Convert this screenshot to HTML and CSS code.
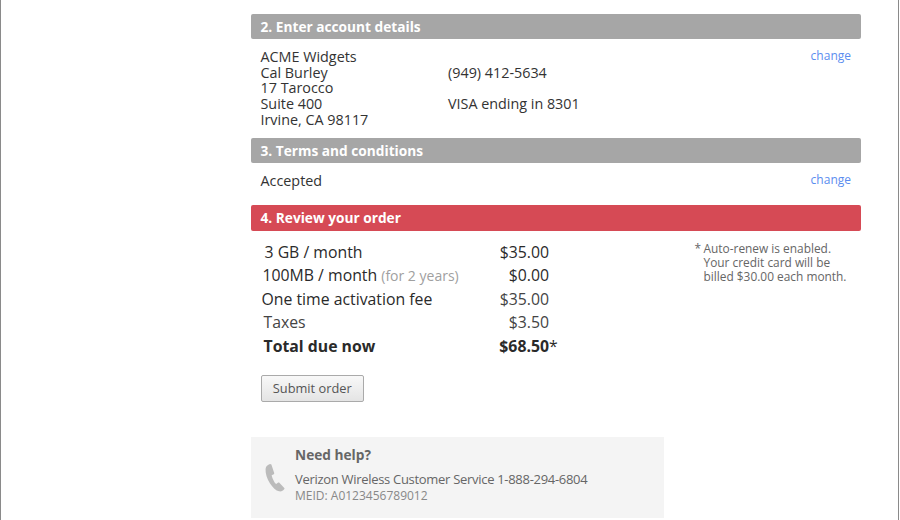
FILE: index.html
```html
<!DOCTYPE html>
<html lang="en">
<head>
  <meta charset="UTF-8">
  <title>Activate device</title>
  <link rel="stylesheet" href="styles.css">
</head>
<body>
  <div class="page">
    <div class="step-bar">2. Enter account details</div>
    <div class="step-body account">
      <div class="account-col address">
        ACME Widgets<br>Cal Burley<br>17 Tarocco<br>Suite 400<br>Irvine, CA 98117
      </div>
      <div class="account-col contact">
        <br>(949) 412-5634<br><br>VISA ending in 8301
      </div>
      <a class="change" href="#">change</a>
    </div>

    <div class="step-bar">3. Terms and conditions</div>
    <div class="step-body terms">
      <div>Accepted</div>
      <a class="change" href="#">change</a>
    </div>

    <div class="step-bar active">4. Review your order</div>
    <div class="review">
      <div class="order">
        <div class="order-row"><span class="item in-4">3 GB / month</span><span class="price">$35.00</span></div>
        <div class="order-row"><span class="item in-2">100MB / month <small>(for 2 years)</small></span><span class="price">$0.00</span></div>
        <div class="order-row"><span class="item in-1">One time activation fee</span><span class="price muted">$35.00</span></div>
        <div class="order-row"><span class="item in-3 muted">Taxes</span><span class="price muted">$3.50</span></div>
        <div class="order-row total"><span class="item in-3">Total due now</span><span class="price">$68.50<i>*</i></span></div>
      </div>
      <div class="note">
        <span class="star">*</span> Auto-renew is enabled.<br>
        Your credit card will be<br>
        billed $30.00 each month.
      </div>
    </div>
    <button class="submit">Submit order</button>

    <div class="help">
      <svg class="phone" width="20" height="29" viewBox="0 0 22 32">
        <path d="M5.5 1.2 C3 2 .8 3.600 .6 6.500 C.3 11 2 17 5.500 22.500 C8.500 27 12 30.300 15.500 31.200 C17.800 31.700 20 30.600 21.300 28.700 L21.500 27.800 L15.500 21.600 L14.500 21.500 L12.300 23.200 C10.800 22.500 8.300 18 7.300 13.600 L9.700 12.300 L10.200 11.300 L7 1.700 Z" fill="#bbbbbb"/>
      </svg>
      <div class="help-text">
        <h4>Need help?</h4>
        <div class="help-line">Verizon Wireless Customer Service 1-888-294-6804</div>
        <div class="meid">MEID: A0123456789012</div>
      </div>
    </div>
  </div>
</body>
</html>
```

FILE: styles.css
```css
html, body {
  margin: 0;
  height: 100%;
  overflow: hidden;
  background: #fff;
}
body {
  font-family: "Open Sans", Arial, sans-serif;
  font-size: 14.35px;
  line-height: 15.6px;
  color: #333;
}
.page {
  box-sizing: border-box;
  width: 899px;
  height: 520px;
  border-left: 1px solid #8a8a8a;
  border-right: 1px solid #8a8a8a;
  padding: 14px 37px 0 250px;
}
.step-bar {
  height: 25px;
  line-height: 25px;
  padding-left: 9.5px;
  background: #a6a6a6;
  border-radius: 2px;
  color: #fff;
  font-weight: bold;
  font-size: 13.7px;
}
.step-bar.active {
  height: 26px;
  background: #d64a55;
}
.step-body {
  position: relative;
  padding-left: 9.5px;
}
.account {
  display: flex;
  padding-top: 10.2px;
  height: 88.8px;
}
.account-col.address { width: 187.5px; }
.terms {
  padding-top: 10px;
  height: 32px;
}
.change {
  position: absolute;
  right: 10px;
  top: 9px;
  font-size: 12px;
  color: #5b8def;
  text-decoration: none;
}
.review {
  display: flex;
  padding-top: 10px;
}
.order {
  width: 288.5px;
  padding-left: 9.5px;
  color: #2a2a2a;
  font-size: 15.8px;
  line-height: 23.4px;
}
.order-row {
  display: flex;
  justify-content: space-between;
}
.in-1 { padding-left: 1px; }
.in-2 { padding-left: 2px; }
.in-3 { padding-left: 3px; }
.in-4 { padding-left: 4px; }
.order-row small {
  font-size: 14px;
  color: #a0a0a0;
}
.muted { color: #444; }
.total { font-weight: bold; }
.price { position: relative; }
.price i {
  position: absolute;
  left: 100%;
  font-style: normal;
  font-weight: normal;
}
.note {
  position: relative;
  margin-left: 145.5px;
  font-size: 11.9px;
  line-height: 14px;
  color: #666;
  padding-left: 9px;
}
.star {
  position: absolute;
  left: 0;
}
.submit {
  display: block;
  margin: 16.5px 0 0 9.5px;
  width: 103.5px;
  height: 27px;
  padding: 0 0 1px;
  border: 1px solid #aaa;
  border-radius: 2px;
  background: linear-gradient(#f8f8f8, #e4e4e4);
  font-family: inherit;
  font-size: 12.8px;
  color: #555;
}
.help {
  display: flex;
  align-items: flex-start;
  width: 413px;
  height: 81px;
  margin-top: 35.5px;
  background: #f4f4f4;
}
.phone {
  margin: 26px 0 0 14px;
}
.help-text {
  margin-left: 10px;
  padding-top: 8px;
}
.help-text h4 {
  margin: 0 0 6px;
  font-size: 13.7px;
  line-height: 20px;
  color: #666;
}
.help-line {
  font-size: 13px;
  letter-spacing: -0.3px;
  line-height: 17px;
  color: #666;
}
.meid {
  font-size: 12px;
  line-height: 16px;
  color: #888;
}
```
